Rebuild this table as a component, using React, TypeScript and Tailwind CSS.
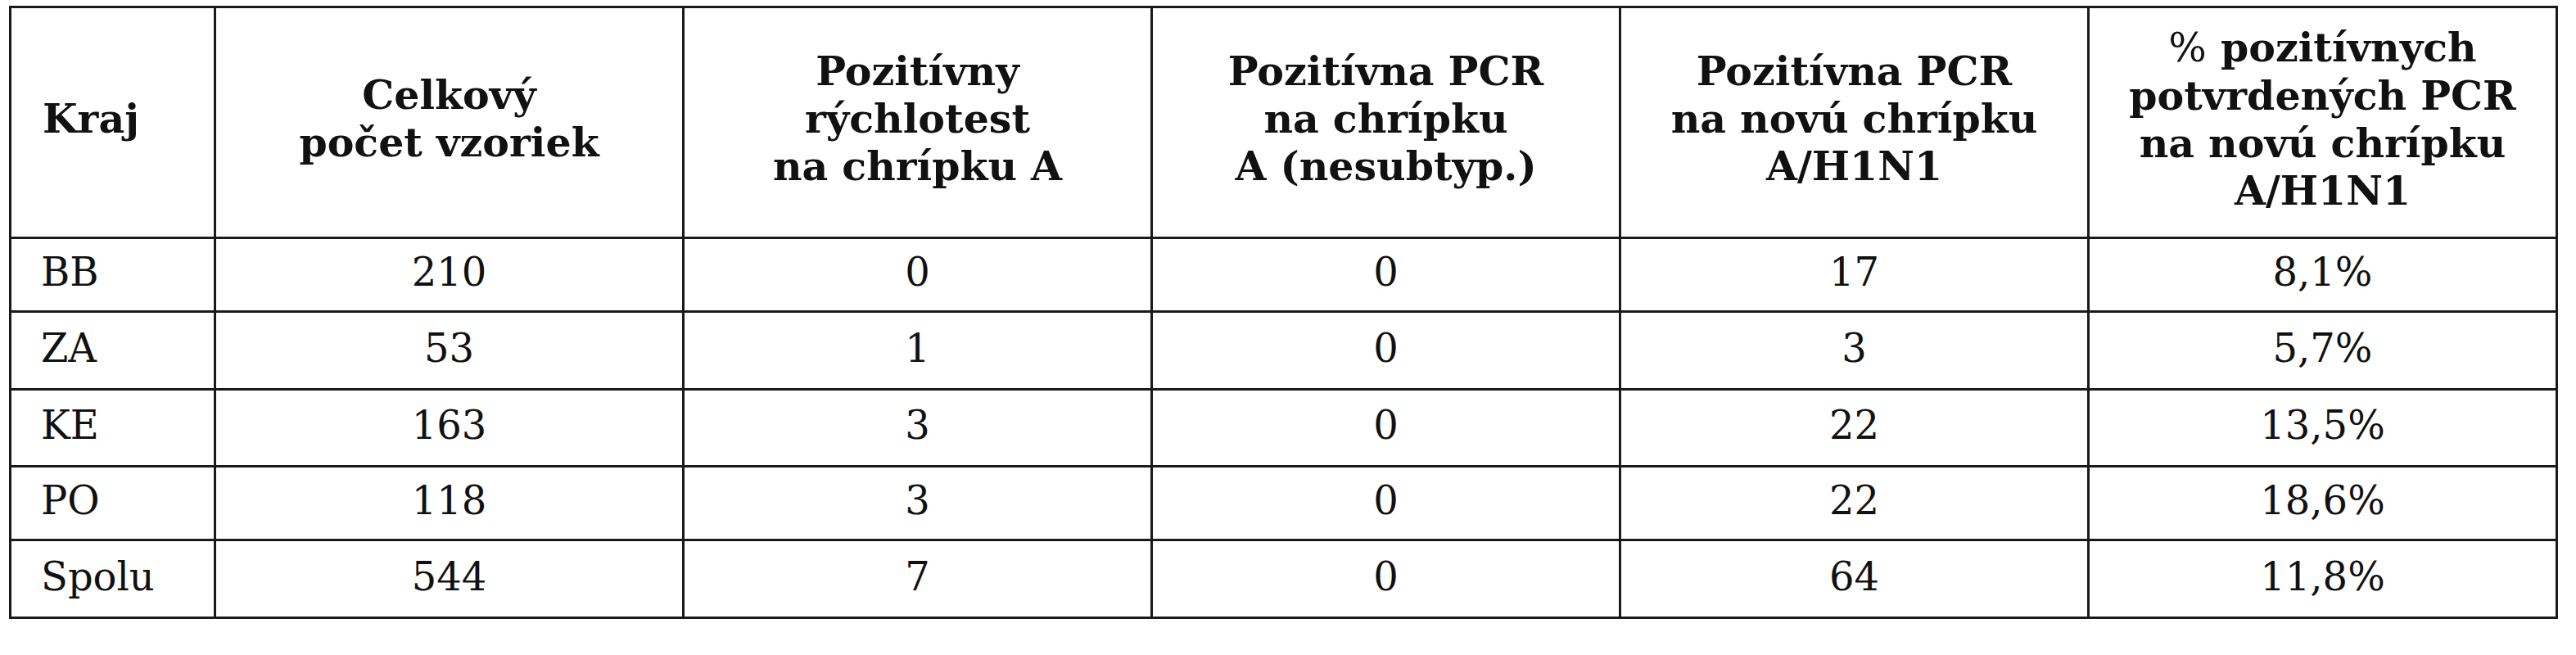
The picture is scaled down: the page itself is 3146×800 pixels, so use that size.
import React from "react";

const headers: React.ReactNode[] = [
  <>Kraj</>,
  <>
    Celkový
    <br />
    počet vzoriek
  </>,
  <>
    Pozitívny
    <br />
    rýchlotest
    <br />
    na chrípku A
  </>,
  <>
    Pozitívna PCR
    <br />
    na chrípku
    <br />A (nesubtyp.)
  </>,
  <>
    Pozitívna PCR
    <br />
    na novú chrípku
    <br />
    A/H1N1
  </>,
  <>
    <span className="font-normal">%</span> pozitívnych
    <br />
    potvrdených PCR
    <br />
    na novú chrípku
    <br />
    A/H1N1
  </>,
];

const rows: string[][] = [
  ["BB", "210", "0", "0", "17", "8,1%"],
  ["ZA", "53", "1", "0", "3", "5,7%"],
  ["KE", "163", "3", "0", "22", "13,5%"],
  ["PO", "118", "3", "0", "22", "18,6%"],
  ["Spolu", "544", "7", "0", "64", "11,8%"],
];

export default function App() {
  return (
    <div className="min-h-[800px] w-full bg-white pt-[7px] pl-[11px] font-['DejaVu_Serif',serif] text-[#111111]">
      <div className="grid w-max grid-cols-[250px_572px_572px_572px_572px_572px] grid-rows-[282px_90px_95px_94px_90px_95px] border-l-[3px] border-t-[3px] border-[#1a1a1a]">
        {headers.map((h, i) => (
          <div
            key={`h${i}`}
            className={`flex items-center border-r-[3px] border-b-[3px] border-[#1a1a1a] pb-[9px] text-[49px] leading-[58px] font-bold ${
              i === 0 ? "justify-start pl-[38px]" : "justify-center text-center"
            }`}
          >
            <div>{h}</div>
          </div>
        ))}
        {rows.map((r, ri) =>
          r.map((c, ci) => (
            <div
              key={`r${ri}c${ci}`}
              className={`flex items-center border-r-[3px] border-b-[3px] border-[#1a1a1a] pb-[7px] text-[48px] leading-none ${
                ci === 0 ? "justify-start pl-[36px]" : "justify-center"
              }`}
            >
              {c}
            </div>
          ))
        )}
      </div>
    </div>
  );
}
